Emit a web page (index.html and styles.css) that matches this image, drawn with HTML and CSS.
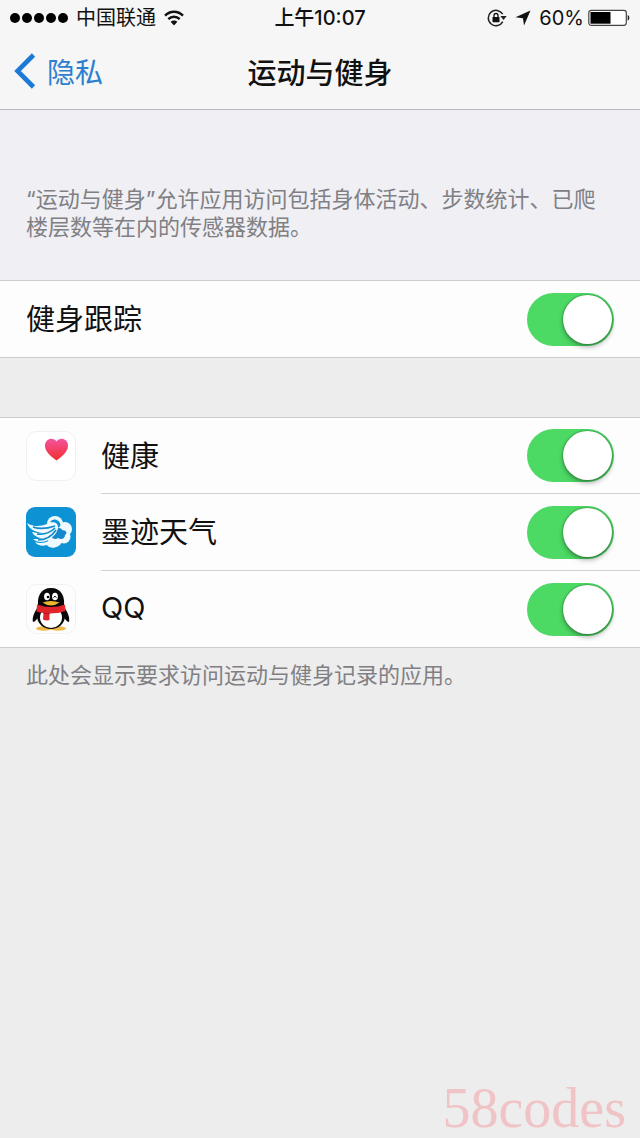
FILE: index.html
```html
<!DOCTYPE html>
<html lang="zh-CN">
<head>
<meta charset="utf-8">
<meta name="viewport" content="width=device-width, initial-scale=1">
<title>运动与健身</title>
<link rel="stylesheet" href="styles.css">
</head>
<body>
<div class="screen">
  <header class="top">
    <div class="status">
      <div class="status-left">
        <svg class="signal" viewBox="0 0 58 10" aria-hidden="true"><circle cx="5" cy="5" r="5"/><circle cx="17" cy="5" r="5"/><circle cx="29" cy="5" r="5"/><circle cx="41" cy="5" r="5"/><circle cx="53" cy="5" r="5"/></svg>
        <span>中国联通</span>
        <svg class="wifi" viewBox="0 0 20 16" aria-hidden="true"><g fill="none" stroke="#111" stroke-width="2.4"><path d="M1 5.6C6 .4 14 .4 19 5.6"/><path d="M4.300 9.200c3.200-3.200 8.200-3.200 11.400 0"/></g><path d="M6.600 11.800c2-1.900 4.800-1.900 6.800 0L10 15.500z" fill="#111"/></svg>
      </div>
      <span class="time">上午10:07</span>
      <div class="status-right">
        <svg class="lock" viewBox="0 0 20 18" aria-hidden="true"><path d="M15.700 5.200A7.700 7.700 0 1 0 15.800 12.600" fill="none" stroke="#222" stroke-width="1.500"/><path d="M13.300 7h6.400l-3.200 4z" fill="#222"/><rect x="5.500" y="8" width="7" height="5.200" rx=".6" fill="#111"/><path d="M7 8V6.500a2 2 0 0 1 4 0V8" fill="none" stroke="#111" stroke-width="1.300"/></svg>
        <svg class="arrow" viewBox="0 0 16 16" aria-hidden="true"><path d="M15.500.5 9 15.500 8 8.200.5 7.200z" fill="#111"/></svg>
        <span>60%</span>
        <svg class="battery" viewBox="0 0 42 18" aria-hidden="true"><rect x=".8" y="1.300" width="37.500" height="15" rx="2.500" fill="#fff" stroke="#444" stroke-width="1.200"/><path d="M2.500 3h20v11.700h-20z" fill="#000"/><path d="M39.700 6c2.200.6 2.200 5 0 5.600z" fill="#222"/></svg>
      </div>
    </div>
    <nav class="nav">
      <a class="back" href="#"><svg viewBox="0 0 22 36" aria-hidden="true"><path d="M19.500 2 3.500 18l16 16" fill="none" stroke="#1c79d6" stroke-width="4.600"/></svg>隐私</a>
      <h1 class="title">运动与健身</h1>
    </nav>
  </header>
  <main>
    <p class="intro">“运动与健身”允许应用访问包括身体活动、步数统计、已爬楼层数等在内的传感器数据。</p>
    <section class="group">
      <div class="row">
        <div class="body">
          <label for="tracking">健身跟踪</label>
          <input class="switch" id="tracking" type="checkbox" role="switch" checked>
        </div>
      </div>
    </section>
    <section class="group apps">
      <div class="row">
        <svg class="icon" viewBox="0 0 50 50" aria-hidden="true">
          <defs><linearGradient id="heart" x1="0" y1="0" x2="0" y2="1"><stop offset="0" stop-color="#f552a0"/><stop offset="1" stop-color="#f0302c"/></linearGradient></defs>
          <rect x=".5" y=".5" width="49" height="49" rx="10" fill="#fff" stroke="#f0f0f0"/>
          <path d="M30.500 29.500C24 24.500 19 20.500 19 14.500c0-7 8.500-9 11.500-4 3-5 11.500-3 11.500 4 0 6-5 10-11.500 15z" fill="url(#heart)"/>
        </svg>
        <div class="body">
          <label for="health">健康</label>
          <input class="switch" id="health" type="checkbox" role="switch" checked>
        </div>
      </div>
      <div class="row">
        <svg class="icon" viewBox="0 0 50 50" aria-hidden="true">
          <rect width="50" height="50" rx="9" fill="#0d93d4"/>
          <g fill="#eefaff"><circle cx="29" cy="17" r="8"/><circle cx="39" cy="22" r="7"/><circle cx="38" cy="30" r="6.500"/><circle cx="29" cy="33" r="7"/></g>
          <path d="M25 29c1-3 3-5 5-7 2-2 6-1 6 1 4 0 6 3 3 5 0 4-4 5-7 3-2 2-6 1-7-2z" fill="#1689cd"/>
          <path d="M24 15c3-4 8-3 10 1 1 2 0 4-2 5-2-4-5-5-8-6z" fill="#0d93d4"/>
          <path d="M1 16c8 5 15 3 22 0 5-2 9 0 9 4 0 5-4 9-8 12-6 4-13 4-17 0 4 0 7 0 10-1-5 0-9-2-11-6 4 1 7 1 10 1-7-1-13-4-15-10z" fill="#eefaff"/>
          <path d="M7 20c8 3 16 1 22-1M11 27c8 1 14-2 18-6M12 33c8 0 14-4 18-10" fill="none" stroke="#148bc9" stroke-width="1.700"/>
          <path d="M9 35c5 2 11 1 15-2 1 4 5 6 8 6-4 3-9 2-11-1-5 2-10 0-12-3z" fill="#eefaff"/>
        </svg>
        <div class="body">
          <label for="weather">墨迹天气</label>
          <input class="switch" id="weather" type="checkbox" role="switch" checked>
        </div>
      </div>
      <div class="row">
        <svg class="icon" viewBox="0 0 50 50" aria-hidden="true">
          <rect x=".5" y=".5" width="49" height="49" rx="10" fill="#fdfdfd" stroke="#f1f1f1"/>
          <ellipse cx="18" cy="44.500" rx="8" ry="2.200" fill="#efb945"/><ellipse cx="32" cy="44.500" rx="8" ry="2.200" fill="#efb945"/>
          <path d="M12 23c-4 5-6 11-5 15 2 0 4-3 5-5h26c1 2 3 5 5 5 1-4-1-10-5-15z" fill="#080808"/>
          <ellipse cx="25" cy="32" rx="14" ry="13" fill="#080808"/>
          <path d="M12.500 25C10 12 15 4 25 4s15 8 12.500 21z" fill="#080808"/>
          <ellipse cx="25" cy="33.500" rx="11" ry="10.500" fill="#fff"/>
          <ellipse cx="21" cy="12.500" rx="2.900" ry="3.800" fill="#fff"/><ellipse cx="29" cy="12.500" rx="2.900" ry="3.800" fill="#fff"/>
          <circle cx="22" cy="13" r="1.300"/><path d="M27.500 13.500q1.500-2.500 3 0" fill="none" stroke="#000" stroke-width="1"/>
          <path d="M16.500 18.500q8.500-3 17 0-8.500 6-17 0z" fill="#f0b62e"/>
          <path d="M11 20.500q14 5 28 0l.5 6.500q-7 2.500-16 2.500v6.500q-3 1-6.500-.5l.5-6.500q-4-.5-7-1.500z" fill="#e0242c"/>
          <path d="M17.500 29q3 .7 6 .6" fill="none" stroke="#a9141c" stroke-width="1"/>
        </svg>
        <div class="body">
          <label for="qq">QQ</label>
          <input class="switch" id="qq" type="checkbox" role="switch" checked>
        </div>
      </div>
    </section>
    <p class="note">此处会显示要求访问运动与健身记录的应用。</p>
  </main>
  <div class="watermark">58codes</div>
</div>
</body>
</html>
```
FILE: styles.css
```css
* {
  box-sizing: border-box;
}

body {
  margin: 0;
  background: #ededed;
  color: #111;
  font-family: Inter, "Noto Sans CJK SC", sans-serif;
}

.screen {
  position: relative;
  min-height: 100vh;
}

.top {
  background: #f6f6f6;
  border-bottom: 1px solid #b9b9bb;
}

.status,
.nav {
  display: grid;
  grid-template-columns: 1fr auto 1fr;
  align-items: center;
}

.status {
  height: 36px;
  padding: 0 10px;
  font-size: 20px;
  line-height: 36px;
}

.status-left,
.status-right {
  display: flex;
  align-items: center;
  gap: 8px;
}

.status-right {
  justify-content: flex-end;
}

.time {
  font-weight: 500;
}

.signal {
  width: 58px;
  height: 10px;
}

.wifi {
  width: 20px;
  height: 16px;
}

.lock {
  width: 20px;
  height: 18px;
}

.arrow {
  width: 16px;
  height: 16px;
}

.battery {
  width: 42px;
  height: 18px;
  margin-left: -4px;
}

.nav {
  height: 73px;
  padding: 0 14px 4px;
}

.back {
  display: flex;
  align-items: center;
  gap: 11px;
  color: #2b80d0;
  font-size: 28px;
  text-decoration: none;
}

.back svg {
  width: 22px;
  height: 36px;
}

.title {
  margin: 0;
  font-size: 29px;
  font-weight: 500;
}

.intro,
.note {
  margin: 0;
  color: #808084;
  font-size: 22px;
  line-height: 28px;
}

.intro {
  padding: 75px 26px 39px;
  background: #efeff4;
}

.note {
  padding: 13px 26px;
}

.group {
  background: #fdfdfd;
  border-top: 1px solid #cbcbd0;
  border-bottom: 1px solid #cbcbd0;
}

.apps {
  margin-top: 59px;
}

.row {
  display: flex;
  align-items: center;
  gap: 25px;
  padding-left: 26px;
}

.icon {
  flex: none;
  width: 50px;
  height: 50px;
}

.body {
  display: flex;
  flex: 1;
  align-items: center;
  justify-content: space-between;
  height: 76px;
  padding-right: 26px;
  font-size: 29px;
}

.body label {
  padding-bottom: 4px;
}

.row + .row .body {
  height: 77px;
  border-top: 1px solid #d2d2d5;
}

.apps .row:first-child .body {
  height: 75px;
}

.switch {
  appearance: none;
  display: flex;
  align-items: center;
  width: 87px;
  height: 53px;
  margin: 0;
  padding: 2px;
  border-radius: 27px;
  background: #ddd;
}

.switch::before {
  content: "";
  width: 49px;
  height: 49px;
  border-radius: 50%;
  background: #fff;
  box-shadow: 0 3px 5px rgba(0, 0, 0, 0.3), 0 0 2px rgba(0, 0, 0, 0.5);
}

.switch:checked {
  justify-content: flex-end;
  background: #4cd964;
}

.watermark {
  position: absolute;
  right: 14px;
  bottom: 0;
  color: #f0c4c6;
  font-family: "Liberation Serif", serif;
  font-size: 56px;
  line-height: 60px;
}
```
